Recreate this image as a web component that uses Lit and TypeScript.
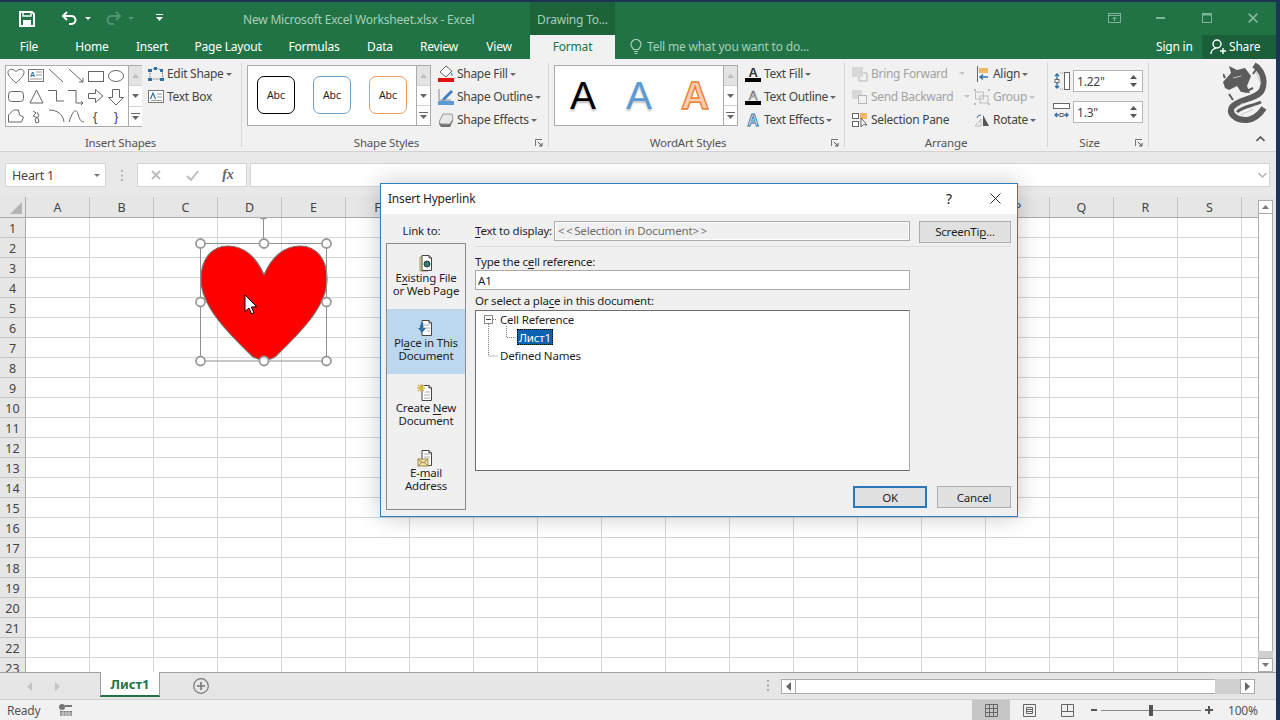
import { LitElement, html, svg, css } from "lit";
import { customElement } from "lit/decorators.js";

const caret = (c = "#666") => html`<svg class="caret" width="6" height="3" viewBox="0 0 6 3"><path d="M0 0h6L3 3z" fill=${c}/></svg>`;

const I = {
  save: html`<svg width="16" height="16" viewBox="0 0 16 16" fill="none" stroke="#fff" stroke-width="2"><path d="M1 1h12l2 2v12H1z"/><path d="M4 1v4h8V1" stroke-width="1.4"/><path d="M4 9h8v6H4z" fill="#fff" stroke="none"/></svg>`,
  undo: (c: string) => html`<svg width="16" height="14" viewBox="0 0 16 14" fill="none" stroke=${c} stroke-width="2"><path d="M6 1L2 5l4 4M2 5h8a4 4 0 0 1 1 8H8"/></svg>`,
  redo: (c: string) => html`<svg width="16" height="14" viewBox="0 0 16 14" fill="none" stroke=${c} stroke-width="2"><path d="M10 1l4 4-4 4M14 5H6a4 4 0 0 0-1 8h3"/></svg>`,
  custom: html`<svg width="7" height="8" viewBox="0 0 7 8"><path d="M0 0h7v1H0zM0 3h7L3.5 7z" fill="#fff"/></svg>`,
  bulb: html`<svg width="12" height="16" viewBox="0 0 12 16" fill="none" stroke="#a5d0b8" stroke-width="1.2"><path d="M3.5 10.5C2.5 8.5 1 7.8 1 5.5a5 5 0 0 1 10 0c0 2.300-1.500 3-2.500 5zM4 12.500h4M4.500 14.500h3"/></svg>`,
  person: html`<svg width="16" height="16" viewBox="0 0 16 16" fill="none" stroke="#fff" stroke-width="1.4"><circle cx="7" cy="5" r="4"/><path d="M1 15c0-3 2-5.500 5-5.800M10 12h6M13 9v6"/></svg>`,
  editShape: html`<svg width="16" height="14" viewBox="0 0 16 14"><path d="M2 3L8 1l6 2 1 9H2z" fill="none" stroke="#7f7f7f" stroke-dasharray="2 1"/><g fill="#2f6ea5"><rect x="0" y="2" width="4" height="3"/><rect x="6" y="0" width="3" height="3"/><rect x="12" y="2" width="3" height="3"/><rect x="0" y="11" width="4" height="3"/><rect x="12" y="11" width="4" height="3"/></g></svg>`,
  textBox: html`<svg width="16" height="14" viewBox="0 0 16 14"><rect x=".5" y=".5" width="15" height="12" fill="#fff" stroke="#777"/><path d="M2.500 9L5 3l2.500 6" fill="none" stroke="#2f6ea5" stroke-width="1.200"/><path d="M9 4h5M9 7h5M3 10.500h11" stroke="#999"/></svg>`,
  shapeFill: html`<svg width="16" height="18" viewBox="0 0 16 18"><path d="M8 1l6 5-6 6-6-5z" fill="#fff" stroke="#666"/><path d="M13 7l2 3-1 1-1-1z" fill="#5a8fc5"/><rect x="0" y="13" width="16" height="4" fill="#e3100f"/></svg>`,
  shapeOutline: html`<svg width="16" height="18" viewBox="0 0 16 18"><path d="M1 1v11h12" fill="none" stroke="#8a8a8a"/><path d="M5 10l8-8 2 2-8 8-3 1z" fill="#3f80c4"/><rect x="0" y="13" width="16" height="4" fill="#5b9bd5"/></svg>`,
  shapeEffects: html`<svg width="16" height="16" viewBox="0 0 16 16"><path d="M1 12L5 3h9l1 6-3 6H3z" fill="#6f6f6f"/><path d="M1 10l4-8h9l1 5-3 5H3z" fill="#e8e8e8" stroke="#999"/></svg>`,
  textFill: html`<svg width="16" height="18" viewBox="0 0 16 18"><text x="8" y="12" text-anchor="middle" class="ia">A</text><rect y="13" width="16" height="4" fill="#000"/></svg>`,
  textOutline: html`<svg width="16" height="18" viewBox="0 0 16 18"><text x="8" y="12" text-anchor="middle" class="ib">A</text><rect y="13" width="16" height="4" fill="#000"/></svg>`,
  textEffects: html`<svg width="16" height="16" viewBox="0 0 16 16"><text x="8" y="14" text-anchor="middle" class="ic">A</text></svg>`,
  front: html`<svg width="16" height="16" viewBox="0 0 16 16"><rect x="0" y="1" width="11" height="10" fill="#d8d8d8"/><path d="M11 7h4v8H7v-4" fill="none" stroke="#b5b5b5"/></svg>`,
  back: html`<svg width="16" height="16" viewBox="0 0 16 16"><rect x="0" y="1" width="10" height="9" fill="#d8d8d8"/><rect x="6.500" y="6.500" width="8" height="8" fill="#f1f1f1" stroke="#b5b5b5"/></svg>`,
  pane: html`<svg width="16" height="16" viewBox="0 0 16 16"><rect x=".5" y="1.500" width="6" height="5" fill="#fff" stroke="#666"/><rect x=".5" y="9.500" width="6" height="5" fill="#fff" stroke="#666"/><rect x="8" y="1" width="7" height="6" fill="#f0b866"/><path d="M9 6v9l2.500-2.500L15 13z" fill="#fff" stroke="#555" stroke-width=".9"/></svg>`,
  align: html`<svg width="16" height="16" viewBox="-2 0 16 16"><path d="M1.500 0v16" stroke="#666"/><rect x="3" y="2" width="9" height="5" fill="#f0b866"/><path d="M12 11H5M7 8.500L4 11l3 2.500" fill="none" stroke="#2f6ea5" stroke-width="1.300"/></svg>`,
  group: html`<svg width="16" height="16" viewBox="0 0 16 16" fill="none" stroke="#bdbdbd"><rect x="1.500" y="3" width="8" height="7"/><rect x="6" y="7" width="8" height="7"/><g fill="#bdbdbd" stroke="none"><rect width="2" height="2"/><rect x="14" width="2" height="2"/><rect y="14" width="2" height="2"/><rect x="14" y="14" width="2" height="2"/></g></svg>`,
  rotate: html`<svg width="16" height="16" viewBox="0 0 16 16"><path d="M1 14L7 7v7z" fill="none" stroke="#bbb"/><path d="M9 3l6 11H9z" fill="#555"/><path d="M3 6a4 4 0 0 1 4-3" fill="none" stroke="#2f6ea5"/></svg>`,
  height: html`<svg width="17" height="18" viewBox="0 0 17 18"><rect x="11.500" y=".5" width="5" height="17" fill="#fff" stroke="#666"/><path d="M4 3v4M4 11v4M2 4l2-2 2 2M2 14l2 2 2-2" fill="none" stroke="#2f6ea5" stroke-width="1.300"/><rect x="2" y="7.500" width="4" height="3" fill="#fff" stroke="#666"/><path d="M7 1h3M7 17h3" stroke="#888" stroke-dasharray="1 1"/></svg>`,
  width: html`<svg width="17" height="18" viewBox="0 0 17 18"><rect x=".5" y=".5" width="16" height="5" fill="#fff" stroke="#666"/><path d="M3 12h3M11 12h3M4 10l-2 2 2 2M13 10l2 2-2 2" fill="none" stroke="#2f6ea5" stroke-width="1.300"/><rect x="7" y="10.500" width="3" height="3" fill="#fff" stroke="#666"/></svg>`,
  launcher: html`<svg width="8" height="8" viewBox="0 0 8 8"><path d="M.5 7V.5H7" fill="none" stroke="#777"/><path d="M3 3l4 4M7 4v3H4" fill="none" stroke="#555"/></svg>`,
  up: html`<svg width="7" height="4" viewBox="0 0 7 4"><path d="M0 4h7L3.500 0z"/></svg>`,
  down: html`<svg width="7" height="4" viewBox="0 0 7 4"><path d="M0 0h7L3.500 4z"/></svg>`,
  more: html`<svg width="9" height="7" viewBox="0 0 9 7"><path d="M0 0h9v1H0zM1 3h7L4.500 7z"/></svg>`,
};

const fileDoc = svg`<path d="M5 1.500h7l2.500 2.500v12.500H5z" fill="#fff" stroke="#444"/><path d="M12 1.500V4h2.500" fill="none" stroke="#444"/>`;
const D = {
  existing: html`<svg width="18" height="18" viewBox="0 0 18 18"><path d="M3 3h8v14H3z" fill="#f2e6b8" stroke="#a09660"/>${fileDoc}<circle cx="10" cy="10" r="3" fill="#2d7d7d" stroke="#333"/></svg>`,
  place: html`<svg width="18" height="18" viewBox="0 0 18 18">${fileDoc}<path d="M7 6h6M7 9h6M10 12h3" stroke="#aaa"/><path d="M6 3c-3 1-3 4-3 6H1l4 5 4-5H6.500c0-2 0-4-.5-6z" fill="#2f6ea5"/></svg>`,
  create: html`<svg width="18" height="18" viewBox="0 0 18 18">${fileDoc}<path d="M8 8h5M7 11h6M7 14h6" stroke="#aaa"/><path d="M4 0v8M0 4h8M1 1l6 6M7 1L1 7" stroke="#d9b84a" stroke-width="1.300"/></svg>`,
  mail: html`<svg width="18" height="18" viewBox="0 0 18 18">${fileDoc}<path d="M7 5h6M7 8h6" stroke="#aaa"/><rect x="1" y="10" width="10" height="7" fill="#f0dfa8" stroke="#9a8a50"/><path d="M1 10l5 4 5-4M1 17l4-4M11 17l-4-4" fill="none" stroke="#9a8a50"/></svg>`,
};

@customElement("app-root")
export class AppRoot extends LitElement {
  static styles = css`
    :host { display: block; width: 1280px; height: 720px; overflow: hidden; position: relative; background: #1c3557;
      font-family: "Noto Sans", "Open Sans", sans-serif; font-size: 11.5px; letter-spacing: -.2px; color: #444; }
    * { box-sizing: border-box; }
    u { text-decoration-thickness: 1px; text-underline-offset: 2px; }
    svg { display: block; flex: none; }
    .app { width: 1276px; height: 720px; display: flex; flex-direction: column; padding-top: 2px; }

    .title { height: 33px; background: #217346; display: flex; align-items: center; color: #a6cfb8; flex: none; }
    .qat { width: 243px; display: flex; align-items: center; flex: none; }
    .q-save { margin-left: 19px; }
    .q-undo { margin-left: 26px; margin-top: -2px; }
    .q-c1 { margin-left: 8px; margin-top: -1px; }
    .q-redo { margin-left: 15px; margin-top: -2px; }
    .q-c2 { margin-left: 6px; margin-top: -1px; }
    .q-cust { margin-left: 22px; margin-top: -2px; }
    .doc-title { width: 287px; font-size: 12px; padding-top: 1px; }
    .ctx { width: 85px; height: 33px; background: #1d6339; display: flex; align-items: center; justify-content: center; font-size: 12px; padding-top: 1px; }
    .win { margin-left: auto; display: flex; align-items: center; height: 33px; padding-bottom: 2px; }
    .w-disp { margin-right: 35px; }
    .w-min { margin-right: 37px; }
    .w-max { margin-right: 36px; }
    .w-close { margin-right: 18px; }

    .tabs { height: 24px; background: #217346; display: flex; align-items: stretch; color: #fff; font-size: 12px; flex: none; }
    .tab { display: flex; align-items: center; justify-content: center; flex: none; padding-bottom: 1px; }
    .tab.active { background: #f1f1f1; color: #217346; }
    .tell { margin-left: 15px; display: flex; align-items: center; gap: 5px; color: #a5d0b8; width: 526px; flex: none; padding-bottom: 1px; }
    .signin { width: 46px; flex: none; display: flex; align-items: center; padding-bottom: 1px; }
    .share { width: 74px; flex: none; background: #1a5f39; display: flex; align-items: center; padding: 0 0 1px 8px; gap: 3px; }

    .ribbon { height: 93px; background: #f1f1f1; border-bottom: 1px solid #d2d2d2; display: flex; padding-top: 3px; flex: none; }
    .group { height: 85px; border-right: 1px solid #d8d8d8; display: flex; flex-direction: column; flex: none; }
    .gbody { height: 74px; display: flex; flex: none; }
    .glabel { height: 14px; line-height: 14px; display: flex; align-items: center; color: #555; }
    .glabel span { flex: 1; text-align: center; }
    .launch { width: 17px; display: flex; justify-content: flex-start; padding-left: 4px; }
    .g1 { width: 242px; } .g2 { width: 307px; } .g3 { width: 296px; } .g4 { width: 203px; } .g5 { width: 101px; }
    .g1 .gbody { padding-left: 5px; } .g2 .gbody { padding-left: 5px; } .g3 .gbody { padding-left: 5px; }
    .g4 .gbody { padding-left: 7px; } .g5 .gbody { padding-left: 5px; }

    .gal { margin-top: 3px; height: 61px; border: 1px solid #ababab; background: #fff; display: flex; flex: none; position: relative; }
    .g1 .gal { width: 137px; height: 62px; }
    .g2 .gal { width: 184px; }
    .g3 .gal { width: 184px; }
    .galscroll { margin-left: auto; width: 14px; border-left: 1px solid #ababab; display: flex; flex-direction: column; background: #fff; flex: none; fill: #666; }
    .galscroll div { flex: 1; display: flex; align-items: center; justify-content: center; border-top: 1px solid #d0d0d0; }
    .galscroll div:first-child { border-top: 0; background: #e3e3e3; fill: #bdbdbd; }
    .abcs { display: flex; padding: 10px 0 0 9px; gap: 18px; }
    .abc { width: 38px; height: 38px; border-radius: 7px; background: #fff; border: 1.500px solid #000; display: flex; align-items: center; justify-content: center; font-size: 10.500px; color: #222; letter-spacing: 0; }
    .abc.b { border-color: #6c9fca; } .abc.o { border-color: #e69a60; }
    .was { display: flex; width: 170px; }
    .wa { width: 56px; text-align: center; font-family: "Liberation Sans", sans-serif; font-size: 39px; line-height: 60px; letter-spacing: 0; }
    .wa.k { color: #000; text-shadow: 0 2px 2px #bbb; }
    .wa.bl { color: #5b9bd5; text-shadow: 0 2px 2px #c4c4c4; }
    .wa.or { color: #f8cbad; -webkit-text-stroke: 1.300px #ed7d31; font-weight: 700; }

    .cmds { display: flex; flex-direction: column; flex: none; }
    .cmd { height: 23px; display: flex; align-items: center; gap: 3px; white-space: nowrap; font-size: 12px; letter-spacing: -.3px; }
    .cmd .caret { margin-left: -1px; margin-top: 1px; }
    .cmd.off { color: #a3a3a3; }
    .cmd .sp { margin-left: 8px; }
    .cmd .sp .caret { margin: 0; }
    .g1 .cmds { margin-left: 6px; } .g2 .cmds { margin-left: 7px; } .g3 .cmds { margin-left: 7px; }
    .col-arr { width: 122px; }
    .size { flex-direction: column; display: flex; padding-top: 8px; gap: 9px; }
    .sz { display: flex; align-items: center; gap: 3px; }
    .spin { width: 70px; height: 22px; background: #fff; border: 1px solid #b5b5b5; display: flex; align-items: center; padding-left: 3px; font-size: 12px; }
    .arrows { margin-left: auto; width: 14px; display: flex; flex-direction: column; gap: 4px; align-items: center; fill: #555; margin-right: 2px; }
    .side { flex: 1; display: flex; flex-direction: column; align-items: flex-end; }
    .dragon { margin: 0 9px 0 0; }
    .collapse { margin: 12px 11px 0 0; }

    .fx { height: 45px; background: #e9e9e9; display: flex; padding: 11px 6px 10px 5px; flex: none; }
    .namebox { width: 101px; background: #fff; border: 1px solid #d4d4d4; display: flex; align-items: center; padding: 0 5px 0 6px; font-size: 12.500px; justify-content: space-between; }
    .dots { width: 31px; display: flex; justify-content: center; align-items: center; }
    .fxbtn { width: 110px; background: #fff; border: 1px solid #d4d4d4; display: flex; align-items: center; }
    .fxbtn > * { flex: 1; display: flex; justify-content: center; }
    .fxi { font-family: "Liberation Serif", serif; font-style: italic; font-weight: 700; font-size: 14px; color: #666; }
    .fxinput { margin-left: 3px; flex: 1; background: #fff; border: 1px solid #d4d4d4; display: flex; align-items: center; justify-content: flex-end; padding-right: 2px; }

    .sheetwrap { display: flex; height: 475px; flex: none; }
    .sheet { width: 1258px; display: flex; flex-direction: column; flex: none; }
    .colhead { height: 21px; display: flex; background: #e6e6e6; border-bottom: 1px solid #ababab; color: #444; font-size: 12.500px; letter-spacing: 0; flex: none; }
    .corner { width: 26px; border-right: 1px solid #ababab; display: flex; align-items: flex-end; justify-content: flex-end; padding: 0 3px 3px 0; }
    .ch { width: 64px; border-right: 1px solid #c0c0c0; display: flex; align-items: center; justify-content: center; }
    .body { display: flex; flex: 1; overflow: hidden; }
    .rowhead { width: 26px; background: #e6e6e6; border-right: 1px solid #ababab; flex: none; font-size: 12.500px; letter-spacing: 0; }
    .rh { height: 20px; border-bottom: 1px solid #c4c4c4; display: flex; align-items: center; justify-content: center; padding-top: 1px; }
    .cells { flex: 1; position: relative; overflow: hidden; background-color: #fff;
      background-image: linear-gradient(to right, transparent 63px, #d6d6d6 63px), linear-gradient(to bottom, transparent 19px, #d6d6d6 19px);
      background-size: 64px 20px; }
    .overlay { position: absolute; left: 0; top: 0; }

    .vbar { width: 18px; background: #e6e6e6; display: flex; flex-direction: column; padding: 3px 3px 0 0; fill: #777; }
    .vbtn { height: 14px; background: #fff; border: 1px solid #ababab; display: flex; align-items: center; justify-content: center; flex: none; }
    .vthumb { flex: 1; background: #fff; border-left: 1px solid #ababab; border-right: 1px solid #ababab; }
    .vtrack { height: 7px; background: #d0d0d0; flex: none; }

    .tabsbar { height: 28px; background: #e6e6e6; border-top: 1px solid #a0a0a0; border-bottom: 1px solid #cfcfcf; display: flex; align-items: flex-start; flex: none; }
    .nav { width: 100px; height: 26px; display: flex; align-items: center; padding-left: 27px; gap: 23px; fill: #c4c4c4; }
    .stab { width: 60px; height: 25px; margin-top: -1px; background: #fff; border: 1px solid #a0a0a0; border-top: 0; border-bottom: 2px solid #217346; color: #217346; font-weight: 700; font-size: 13px; letter-spacing: 0; display: flex; align-items: center; justify-content: center; flex: none; }
    .plus { margin-left: 33px; margin-top: 5px; }
    .hdots { margin-left: 558px; margin-top: 7px; }
    .hbar { margin-left: 12px; margin-top: 6px; width: 474px; height: 15px; display: flex; background: #d0d0d0; fill: #666; }
    .hbtn { width: 15px; background: #fff; border: 1px solid #ababab; display: flex; align-items: center; justify-content: center; flex: none; }
    .hthumb { width: 419px; background: #fff; border-top: 1px solid #ababab; border-bottom: 1px solid #ababab; flex: none; }
    .hgap { flex: 1; }

    .status { height: 20px; background: #f1f1f1; display: flex; align-items: center; padding-left: 7px; flex: 1; color: #555; font-size: 12px; }
    .macro { margin-left: 19px; }
    .views { margin-left: auto; display: flex; height: 20px; align-items: center; }
    .view { width: 38px; height: 20px; display: flex; align-items: center; justify-content: center; }
    .view.on { background: #c6c6c6; }
    .zoomctl { display: flex; align-items: center; margin-left: 5px; }
    .slider { width: 100px; height: 1px; background: #888; margin: 0 4px 0 4px; display: flex; justify-content: center; align-items: center; }
    .slider i { display: block; width: 4px; height: 11px; background: #555; }
    .pct { width: 48px; margin-left: 15px; }

    .dlg { position: absolute; left: 380px; top: 183px; width: 638px; height: 334px; border: 1.500px solid #2f7fbb; background: #f0f0f0; display: flex; flex-direction: column; color: #1f1f1f; box-shadow: 0 0 22px rgba(0,0,0,.22); font-size: 11.500px; }
    .dt { height: 30px; background: #fff; display: flex; align-items: center; padding: 0 0 2px 7px; flex: none; font-size: 12px; }
    .dt .q { margin-left: auto; font-size: 14px; margin-right: 38px; color: #222; }
    .dt .x { margin-right: 16px; }
    .db { display: flex; padding-left: 5px; flex: 1; }
    .link { width: 80px; flex: none; }
    .link-l { height: 29px; display: flex; align-items: center; justify-content: center; padding: 4px 9px 0 0; }
    .list { height: 267px; border: 1px solid #8b8b8b; }
    .li { height: 65px; display: flex; flex-direction: column; align-items: center; padding-top: 10px; text-align: center; line-height: 13px; }
    .li svg { margin-bottom: -1px; }
    .li.sel { background: #bcd8ef; }
    .main { width: 536px; margin-left: 9px; flex: none; }
    .r1 { display: flex; align-items: flex-start; margin-top: 7px; height: 22px; }
    .r1 .lb { width: 79px; height: 19px; display: flex; align-items: center; }
    .disp { width: 356px; height: 20px; background: #f0f0f0; border: 1px solid #ababab; box-shadow: inset 0 0 0 1px #fff; display: flex; align-items: center; padding: 0 0 1px 3px; color: #6d6d6d; letter-spacing: -.15px; }
    .disp b { font-weight: 400; letter-spacing: 1.500px; }
    .btn { width: 74px; height: 22px; background: #e1e1e1; border: 1px solid #adadad; display: flex; align-items: center; justify-content: center; }
    .tip { width: 92px; margin-left: 9px; padding-bottom: 2px; }
    .sep { height: 1px; background: #dcdcdc; margin-top: 3px; }
    .lb2 { height: 14px; line-height: 14px; display: flex; align-items: center; }
    .l-a { margin-top: 8px; } .l-b { margin-top: 4px; }
    .inp { width: 435px; height: 20px; margin-top: 1px; background: #fff; border: 1px solid #ababab; display: flex; align-items: center; padding-left: 2px; }
    .tree { width: 435px; height: 161px; margin-top: 2px; background: #fff; border: 1px solid #6f6f6f; border-right-color: #aaa; padding-top: 0; }
    .tree-in { margin-top: -1px; position: relative; }
    .tr { height: 18px; display: flex; align-items: center; padding-left: 24px; }
    .tr.child { padding-left: 41px; }
    .tr .pick { background: #0a62b2; color: #fff; outline: 1px dotted #000; outline-offset: -1px; padding: 0 2px; height: 16px; display: flex; align-items: center; }
    .tree svg { position: absolute; left: -1px; top: 0; }
    .btns { display: flex; justify-content: flex-end; gap: 10px; margin-top: 15px; }
    .ok { border: 2px solid #2b78b8; }
    .ia { font: 700 13px "Liberation Sans", sans-serif; fill: #333; }
    .ib { font: 400 13px "Liberation Sans", sans-serif; fill: #fff; stroke: #555; stroke-width: .6; }
    .ic { font: 700 16px "Liberation Sans", sans-serif; fill: #cfe2f5; stroke: #2f6ea5; stroke-width: .8; }
    .gt { font: 700 7px "Liberation Sans", sans-serif; fill: #2f6ea5; }
    .br { font: 400 13px "Liberation Sans", sans-serif; fill: #444; }
  `;

  private tabs: [string, number][] = [["File", 58], ["Home", 68], ["Insert", 52], ["Page Layout", 100], ["Formulas", 72], ["Data", 60], ["Review", 58], ["View", 62]];
  /* Letters G to O lie wholly behind the dialog, so those header cells stay empty. */
  private cols = ["A", "B", "C", "D", "E", "F", "", "", "", "", "", "", "", "", "", "P", "Q", "R", "S"];

  private scrollCol() {
    return html`<div class="galscroll"><div>${I.up}</div><div>${I.down}</div><div>${I.more}</div></div>`;
  }

  private shapes() {
    return html`<svg width="122" height="60" viewBox="6 66 122 60" fill="none" stroke="#666" stroke-width="1">
      <path d="M16 83C12 79 8 76 8 72.500 8 69 12 68 16 71.500 20 68 24 69 24 72.500 24 76 20 79 16 83z"/>
      <rect x="28.500" y="69.500" width="15" height="12" stroke="#777"/>
      <text x="30" y="77" class="gt" stroke="none">A</text><path d="M36 72h6M36 75h6M30 79h12" stroke="#999"/>
      <path d="M49 69l14 13M69 69l14 13M83 82v-4M83 82h-4"/>
      <rect x="88.500" y="71.500" width="15" height="10"/><ellipse cx="116" cy="76" rx="7.500" ry="5.500"/>
      <rect x="8.500" y="91.500" width="15" height="10" rx="3"/><path d="M36.500 90l6.500 13H30z"/>
      <path d="M48 90.500h8.500V101H64M68 90.500h8V103h7M81 101l2 2-2 2"/>
      <path d="M88.500 93.500h7v-4l7.500 6.500-7.500 6.500v-4h-7z"/><path d="M112.500 89.500h7v8h4l-7.500 7.500-7.500-7.500h4z"/>
      <path d="M8.500 115l5-5h5l1 5 4 2-2 5H8.500z"/>
      <path d="M33 111l3 2-3 3 5 2 1 4-3 1-1-4 4-3-2-4"/>
      <path d="M49 110c8 0 14 4 15 12M69 122c4-12 7-14 9-8s2 7 6 8"/>
      <text x="95" y="121" class="br" text-anchor="middle" stroke="none">{</text>
      <text x="116" y="121" class="br" text-anchor="middle" stroke="none">}</text>
    </svg>`;
  }

  private dialog() {
    return html`<div class="dlg">
      <div class="dt"><span>Insert Hyperlink</span><span class="q">?</span>
        <svg class="x" width="11" height="11" viewBox="0 0 11 11"><path d="M.5.500l10 10M10.500.500l-10 10" stroke="#333" fill="none"/></svg></div>
      <div class="db">
        <div class="link">
          <div class="link-l">Link to:</div>
          <div class="list">
            <div class="li">${D.existing}<span>E<u>x</u>isting File</span><span>or Web Page</span></div>
            <div class="li sel">${D.place}<span>Pl<u>a</u>ce in This</span><span>Document</span></div>
            <div class="li">${D.create}<span>Create <u>N</u>ew</span><span>Document</span></div>
            <div class="li">${D.mail}<span>E-<u>m</u>ail</span><span>Address</span></div>
          </div>
        </div>
        <div class="main">
          <div class="r1"><div class="lb"><span><u>T</u>ext to display:</span></div><div class="disp"><span><b>&lt;&lt;</b>Selection in Document<b>&gt;&gt;</b></span></div><div class="btn tip"><span>ScreenTi<u>p</u>...</span></div></div>
          <div class="sep"></div>
          <div class="lb2 l-a"><span>Type the c<u>e</u>ll reference:</span></div>
          <div class="inp">A1</div>
          <div class="lb2 l-b"><span>Or select a pla<u>c</u>e in this document:</span></div>
          <div class="tree"><div class="tree-in">
            <svg width="60" height="60" viewBox="0 0 60 60" fill="none">
              <path d="M13.500 14v32h9M31.500 16v11.500h9M18 9.500h4" stroke="#777" stroke-dasharray="1 1"/>
              <rect x="9.500" y="5.500" width="8" height="8" fill="#fff" stroke="#8a8a8a"/><path d="M11 9.500h5" stroke="#444"/>
            </svg>
            <div class="tr"><span>Cell Reference</span></div>
            <div class="tr child"><span class="pick">Лист1</span></div>
            <div class="tr"><span>Defined Names</span></div>
          </div></div>
          <div class="btns"><div class="btn ok">OK</div><div class="btn">Cancel</div></div>
        </div>
      </div>
    </div>`;
  }

  private overlay() {
    const hs: [number, number][] = [[200.5, 243.5], [264, 243.5], [326.5, 243.5], [200.5, 302], [326.5, 302], [200.5, 361], [264, 361], [326.5, 361]];
    return html`<svg class="overlay" width="1232" height="454" viewBox="26 218 1232 454" fill="none">
      <path d="M264 275C256 256 243 246 228 246 211 246 201 260 201 279 201 305 225 330 252 356 258 361 270 361 276 356 303 330 327 305 327 279 327 260 317 246 300 246 285 246 272 256 264 275z" fill="#fe0000" stroke="#7f6a6a" stroke-width="1.200"/>
      <rect x="200.500" y="243.500" width="126" height="117.500" stroke="#8f8f8f"/>
      <path d="M263.500 218v25" stroke="#8f8f8f"/>
      <circle cx="263.500" cy="213.500" r="5" fill="#fff" stroke="#9a9a9a" stroke-width="2"/>
      ${hs.map(([x, y]) => svg`<circle cx=${x} cy=${y} r="4.500" fill="#fff" stroke="#9a9a9a" stroke-width="1.800"/>`)}
      <path d="M245 295v16.500l4-3.500 2.700 6 2.300-1-2.600-6 5.300-.3z" fill="#fff" stroke="#000"/>
    </svg>`;
  }

  render() {
    const dim = "#4f9570";
    return html`<div class="app">
      <div class="title">
        <div class="qat"><span class="q-save">${I.save}</span><span class="q-undo">${I.undo("#fff")}</span><span class="q-c1">${caret("#fff")}</span>
          <span class="q-redo">${I.redo(dim)}</span><span class="q-c2">${caret(dim)}</span><span class="q-cust">${I.custom}</span></div>
        <div class="doc-title">New Microsoft Excel Worksheet.xlsx - Excel</div>
        <div class="ctx">Drawing To...</div>
        <div class="win">
          <svg class="w-disp" width="13" height="10" viewBox="0 0 13 10" fill="none" stroke="#7fb597"><rect x=".5" y=".5" width="12" height="9"/><path d="M.5 2.500h12M6.500 8V4M4.500 6l2-2 2 2"/></svg>
          <svg class="w-min" width="9" height="2" viewBox="0 0 9 2"><rect width="9" height="2" fill="#7fb597"/></svg>
          <svg class="w-max" width="10" height="10" viewBox="0 0 10 10" fill="none" stroke="#7fb597"><rect x=".5" y=".5" width="9" height="9"/><path d="M0 1.500h10" stroke-width="2"/></svg>
          <svg class="w-close" width="10" height="10" viewBox="0 0 10 10"><path d="M.7.7l8.600 8.600M9.300.7L.7 9.300" stroke="#7fb597" stroke-width="1.800"/></svg>
        </div>
      </div>
      <div class="tabs">
        ${this.tabs.map(([t, w]) => html`<div class="tab" style="width:${w}px">${t}</div>`)}
        <div class="tab active" style="width:85px">Format</div>
        <div class="tell">${I.bulb}<span>Tell me what you want to do...</span></div>
        <div class="signin">Sign in</div>
        <div class="share">${I.person}<span>Share</span></div>
      </div>
      <div class="ribbon">
        <div class="group g1">
          <div class="gbody">
            <div class="gal">${this.shapes()}${this.scrollCol()}</div>
            <div class="cmds"><div class="cmd">${I.editShape}<span>Edit Shape</span>${caret()}</div><div class="cmd">${I.textBox}<span>Text Box</span></div></div>
          </div>
          <div class="glabel"><span>Insert Shapes</span></div>
        </div>
        <div class="group g2">
          <div class="gbody">
            <div class="gal"><div class="abcs"><div class="abc">Abc</div><div class="abc b">Abc</div><div class="abc o">Abc</div></div>${this.scrollCol()}</div>
            <div class="cmds"><div class="cmd">${I.shapeFill}<span>Shape Fill</span>${caret()}</div><div class="cmd">${I.shapeOutline}<span>Shape Outline</span>${caret()}</div><div class="cmd">${I.shapeEffects}<span>Shape Effects</span>${caret()}</div></div>
          </div>
          <div class="glabel"><span>Shape Styles</span><div class="launch">${I.launcher}</div></div>
        </div>
        <div class="group g3">
          <div class="gbody">
            <div class="gal"><div class="was"><div class="wa k">A</div><div class="wa bl">A</div><div class="wa or">A</div></div>${this.scrollCol()}</div>
            <div class="cmds"><div class="cmd">${I.textFill}<span>Text Fill</span>${caret()}</div><div class="cmd">${I.textOutline}<span>Text Outline</span>${caret()}</div><div class="cmd">${I.textEffects}<span>Text Effects</span>${caret()}</div></div>
          </div>
          <div class="glabel"><span>WordArt Styles</span><div class="launch">${I.launcher}</div></div>
        </div>
        <div class="group g4">
          <div class="gbody">
            <div class="cmds col-arr">
              <div class="cmd off">${I.front}<span>Bring Forward</span><span class="sp">${caret("#c4c4c4")}</span></div>
              <div class="cmd off">${I.back}<span>Send Backward</span><span class="sp">${caret("#c4c4c4")}</span></div>
              <div class="cmd">${I.pane}<span>Selection Pane</span></div>
            </div>
            <div class="cmds">
              <div class="cmd">${I.align}<span>Align</span>${caret()}</div>
              <div class="cmd off">${I.group}<span>Group</span>${caret("#c4c4c4")}</div>
              <div class="cmd">${I.rotate}<span>Rotate</span>${caret()}</div>
            </div>
          </div>
          <div class="glabel"><span>Arrange</span></div>
        </div>
        <div class="group g5">
          <div class="gbody"><div class="size">
            <div class="sz">${I.height}<div class="spin">1.22"<div class="arrows">${I.up}${I.down}</div></div></div>
            <div class="sz">${I.width}<div class="spin">1.3"<div class="arrows">${I.up}${I.down}</div></div></div>
          </div></div>
          <div class="glabel"><span>Size</span><div class="launch">${I.launcher}</div></div>
        </div>
        <div class="side">
          <svg class="dragon" width="44" height="62" viewBox="0 0 44 62" fill="none" stroke="#5c5c5c">
            <path d="M31 3C39 8 43 18 39 28 35 37 15 37 9 45 5 52 14 59 24 58 32 57 37 52 41 46" stroke-width="6"/>
            <path d="M0 20L8 11 6 4 14 8 22 6 28 14 24 24 27 31 18 30 14 24 6 28 2 26z" fill="#5c5c5c" stroke="none"/>
            <path d="M22 30L30 26M18 40L28 36M6 32L10 38M30 12L36 3M2 16L0 12" stroke-width="2"/>
            <path d="M14 50C20 44 30 44 38 40" stroke-width="3"/>
            <path d="M12 47L20 41M18 53L30 47M33 10L38 22M10 16L18 14" stroke="#c8c8c8" stroke-width="1"/>
          </svg>
          <svg class="collapse" width="9" height="6" viewBox="0 0 9 6" fill="none" stroke="#555" stroke-width="1.600"><path d="M.5 5l4-4 4 4"/></svg>
        </div>
      </div>
      <div class="fx">
        <div class="namebox"><span>Heart 1</span>${caret("#777")}</div>
        <div class="dots"><svg width="2" height="11" viewBox="0 0 2 11"><path d="M0 0h2v2H0zM0 4.500h2v2H0zM0 9h2v2H0z" fill="#b5b5b5"/></svg></div>
        <div class="fxbtn">
          <span><svg width="10" height="10" viewBox="0 0 10 10"><path d="M1 1l8 8M9 1L1 9" stroke="#bdbdbd" stroke-width="2"/></svg></span>
          <span><svg width="13" height="11" viewBox="0 0 13 11" fill="none"><path d="M1 6l4 4 7-9" stroke="#bdbdbd" stroke-width="2"/></svg></span>
          <span class="fxi">fx</span>
        </div>
        <div class="fxinput"><svg width="9" height="6" viewBox="0 0 9 6" fill="none" stroke="#b5b5b5" stroke-width="1.500"><path d="M.5 1l4 4 4-4"/></svg></div>
      </div>
      <div class="sheetwrap">
        <div class="sheet">
          <div class="colhead"><div class="corner"><svg width="12" height="12" viewBox="0 0 12 12"><path d="M12 0v12H0z" fill="#b4b4b4"/></svg></div>${this.cols.map((c) => html`<div class="ch">${c}</div>`)}</div>
          <div class="body">
            <div class="rowhead">${Array.from({ length: 23 }, (_, i) => html`<div class="rh">${i + 1}</div>`)}</div>
            <div class="cells">${this.overlay()}</div>
          </div>
        </div>
        <div class="vbar">
          <div class="vbtn">${I.up}</div><div class="vthumb"></div><div class="vtrack"></div><div class="vbtn">${I.down}</div>
        </div>
      </div>
      <div class="tabsbar">
        <div class="nav"><svg width="5" height="9" viewBox="0 0 5 9"><path d="M5 0v9L0 4.500z"/></svg><svg width="5" height="9" viewBox="0 0 5 9"><path d="M0 0v9l5-4.500z"/></svg></div>
        <div class="stab">Лист1</div>
        <svg class="plus" width="16" height="16" viewBox="0 0 16 16" fill="none" stroke="#777"><circle cx="8" cy="8" r="7.300" stroke-width="1.200"/><path d="M8 4v8M4 8h8" stroke-width="1.600"/></svg>
        <svg class="hdots" width="2" height="11" viewBox="0 0 2 11"><path d="M0 0h2v2H0zM0 4.500h2v2H0zM0 9h2v2H0z" fill="#a8a8a8"/></svg>
        <div class="hbar">
          <div class="hbtn"><svg width="5" height="9" viewBox="0 0 5 9"><path d="M5 0v9L0 4.500z"/></svg></div>
          <div class="hthumb"></div><div class="hgap"></div>
          <div class="hbtn"><svg width="5" height="9" viewBox="0 0 5 9"><path d="M0 0v9l5-4.500z"/></svg></div>
        </div>
      </div>
      <div class="status">
        <span>Ready</span>
        <svg class="macro" width="13" height="12" viewBox="0 0 13 12"><circle cx="3" cy="3" r="3" fill="#777"/><path d="M6 1h7v2H6zM1 7h12v5H1z" fill="#777"/><path d="M1 9h12M1 11h12M4 7v5M7 7v5M10 7v5" stroke="#f1f1f1" stroke-width=".7"/></svg>
        <div class="views">
          <div class="view on"><svg width="13" height="13" viewBox="0 0 13 13" fill="none" stroke="#666"><path d="M.5.500h12v12H.5zM.5 4.500h12M.5 8.500h12M4.500.5v12M8.500.5v12"/></svg></div>
          <div class="view"><svg width="13" height="13" viewBox="0 0 13 13" fill="none" stroke="#666"><path d="M.5.500h12v12H.5zM3.500 3.500h6v6h-6zM4 5.500h5M4 7.500h5"/></svg></div>
          <div class="view"><svg width="13" height="13" viewBox="0 0 13 13" fill="none" stroke="#666"><path d="M.5.500h12v12H.5zM.5 7.500h12M6.500.5v7"/></svg></div>
        </div>
        <div class="zoomctl">
          <svg width="6" height="2" viewBox="0 0 6 2"><rect width="6" height="2" fill="#555"/></svg>
          <div class="slider"><i></i></div>
          <svg width="8" height="8" viewBox="0 0 8 8"><path d="M0 3h8v2H0zM3 0h2v8H3z" fill="#555"/></svg>
          <span class="pct">100%</span>
        </div>
      </div>
      ${this.dialog()}
    </div>`;
  }
}
